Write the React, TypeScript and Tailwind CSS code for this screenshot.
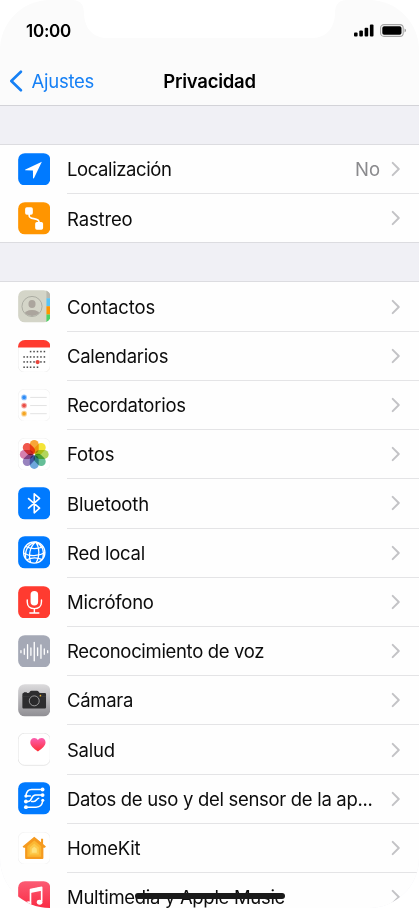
import React from 'react';

type Item = {
  label: string;
  icon: React.ReactNode;
  value?: string;
  tracking?: string;
};

const Chevron = () => (
  <svg viewBox="0 0 10 16" className="w-[10px] h-[16px] shrink-0" fill="none">
    <path d="M1.7 1.9 7.8 8l-6.1 6.1" stroke="#c3c3c6" strokeWidth="2" strokeLinecap="round" strokeLinejoin="round" />
  </svg>
);

function Tile({ fill, border, children }: { fill: string; border?: string; children: React.ReactNode }) {
  return (
    <svg viewBox="0 0 32 32" className="w-[32.5px] h-[32.5px] shrink-0">
      <rect x=".15" y=".15" width="31.7" height="31.7" rx="6.6" fill={fill} stroke={border ?? 'none'} strokeWidth=".7" />
      {children}
    </svg>
  );
}

const petals = ['#f89a1c', '#f3e11b', '#a8cf45', '#4fb589', '#5a9bd8', '#8a72b5', '#cf6da3', '#ee3f33'];
const calendarRows = [
  { y: 11.4, xs: [12.4, 15.8, 19.2, 22.6, 26] },
  { y: 16.7, xs: [6, 9.2, 12.4, 15.8, 19.2, 22.6, 26] },
  { y: 21.6, xs: [6, 9.2, 12.4, 15.8, 22.6, 26] },
  { y: 26.8, xs: [6, 9.2, 12.4, 15.8, 19.2] },
];
const waves = [
  [2.9, 1], [6.2, 2.6], [9.4, 6.8], [12.7, 3.6], [16, 9], [19.3, 3.8], [22.6, 6.6], [25.9, 2.6], [29.2, 1],
];

const LocationIcon = (
  <Tile fill="#007aff">
    <path d="M23.5 8.7 7.3 16.2c-.5.3-.4.9.2.9l7.2.2.1 7.2c0 .7.7.8 1 .2Z" fill="#fff" />
  </Tile>
);

const TrackingIcon = (
  <Tile fill="#ff9500">
    <path d="M11 11v2.5c0 4.5 9.8 1 9.8 6.5v3" stroke="#fff" strokeWidth="1.6" fill="none" />
    <rect x="7" y="5.2" width="7.6" height="7.4" rx="1.7" fill="#fff" />
    <rect x="16.9" y="19.6" width="7.8" height="7.8" rx="1.7" fill="#fff" />
  </Tile>
);

const ContactsIcon = (
  <Tile fill="#d4d5c8">
    <clipPath id="contacts-tile"><rect width="32" height="32" rx="6.8" /></clipPath>
    <clipPath id="contacts-face"><circle cx="13.8" cy="16.2" r="9.4" /></clipPath>
    <g clipPath="url(#contacts-tile)">
      <path d="M28 0h4v8h-4z" fill="#b8b8ae" />
      <path d="M28 8h4v8h-4z" fill="#5ac4f5" />
      <path d="M28 16h4v8h-4z" fill="#ff9500" />
      <path d="M28 24h4v8h-4z" fill="#4cd263" />
    </g>
    <g clipPath="url(#contacts-face)" fill="#aba59d">
      <ellipse cx="13.8" cy="13.8" rx="3.5" ry="4" />
      <ellipse cx="13.8" cy="24.3" rx="8" ry="4.6" />
    </g>
    <circle cx="13.8" cy="16.2" r="9.9" fill="none" stroke="#a9aaa0" strokeWidth=".9" />
  </Tile>
);

const CalendarIcon = (
  <Tile fill="#fff" border="#eaeaea">
    <path d="M0 7.4V6.8A6.8 6.8 0 0 1 6.8 0h18.4A6.8 6.8 0 0 1 32 6.8v.6Z" fill="#ff3b30" />
    {calendarRows.map((row) =>
      row.xs.map((x) => (
        <rect key={`${x}-${row.y}`} x={x - 0.75} y={row.y - 0.75} width="1.5" height="1.5" fill="#4a4a4a" />
      ))
    )}
    <circle cx="19.3" cy="21.7" r="2.1" fill="#e8453c" />
  </Tile>
);

const RemindersIcon = (
  <Tile fill="#fff" border="#efefef">
    {[['#2e8cf6', 8.3], ['#ea4f48', 16.3], ['#f5a623', 24.3]].map(([color, y]) => (
      <g key={color}>
        <circle cx="6" cy={y} r="2.8" fill={color as string} opacity=".5" />
        <circle cx="6" cy={y} r="1.8" fill={color as string} />
        <path d={`M12 ${y}h16.3`} stroke="#dcdcdc" strokeWidth=".8" />
      </g>
    ))}
  </Tile>
);

const PhotosIcon = (
  <Tile fill="#fff" border="#efefef">
    {petals.map((color, i) => (
      <rect
        key={color}
        x="11.6"
        y="2"
        width="8.8"
        height="13.4"
        rx="4.4"
        fill={color}
        opacity=".88"
        transform={`rotate(${i * 45} 16 16.2)`}
        className="mix-blend-multiply"
      />
    ))}
  </Tile>
);

const BluetoothIcon = (
  <Tile fill="#007aff">
    <path d="m10.4 11.4 10.8 9.5-5.2 4.5V6.7l5.2 4.5-10.8 9.5" fill="none" stroke="#fff" strokeWidth="1.6" strokeLinejoin="round" strokeLinecap="round" />
  </Tile>
);

const NetworkIcon = (
  <Tile fill="#007aff">
    <g fill="none" stroke="#fff" strokeWidth="1.2">
      <circle cx="16" cy="16.2" r="10.5" strokeWidth="1.3" />
      <path d="M17.5 5.8C11.5 10 10 20 12.6 26.2M17.5 5.8c3.8 5.5 4.2 14.5.2 20.8M17.5 5.8c6 3 8.5 9 7 15.8M17.5 5.8C10 8 6.8 14 7.6 21.5" />
      <path d="M7.8 10.3c5 2.6 11.5 2.5 17 .3M5.5 16.8c6 3.6 14.6 3.6 21-.6M8.6 23.4c4.4-2 11-2 15.4-.2" />
    </g>
  </Tile>
);

const MicIcon = (
  <Tile fill="#ff3b30">
    <rect x="12.4" y="5" width="7.4" height="14.2" rx="3.7" fill="#fff" />
    <path d="M9.1 13.8v2c0 4 2.8 6.5 7 6.5s7-2.5 7-6.5v-2M16.1 22.3v4M11.7 26.6h8.8" fill="none" stroke="#fff" strokeWidth="1.4" strokeLinecap="round" />
  </Tile>
);

const SpeechIcon = (
  <Tile fill="#a5a9b6">
    {waves.map(([x, h]) => (
      <path key={x} d={`M${x} ${16.4 - h}v${h * 2}`} stroke="#fff" strokeWidth="1.3" strokeLinecap="round" />
    ))}
  </Tile>
);

const CameraIcon = (
  <Tile fill="url(#camera-bg)">
    <linearGradient id="camera-bg" x1="0" y1="0" x2="0" y2="1">
      <stop stopColor="#dcdbdd" />
      <stop offset="1" stopColor="#8f8e93" />
    </linearGradient>
    <path d="M4.3 10.2c0-.9.6-1.4 1.4-1.4V8.2h3v.6H10c1.6 0 1.7-2.2 3.3-2.2h5.4c1.6 0 1.7 2.2 3.3 2.2h4.2c.9 0 1.4.5 1.4 1.4v12.6c0 .9-.5 1.4-1.4 1.4H5.7c-.9 0-1.4-.5-1.4-1.4Z" fill="#2d2d2f" />
    <path d="M4.3 12.4h23.3" stroke="#454547" strokeWidth=".5" />
    <circle cx="16" cy="16.6" r="5.8" fill="#2d2d2f" />
    <circle cx="16" cy="16.6" r="4.9" fill="#29292b" stroke="#b0b0b2" strokeWidth=".8" />
    <circle cx="22.1" cy="11.5" r=".8" fill="#f0b62c" />
  </Tile>
);

const HealthIcon = (
  <Tile fill="#fff" border="#dedede">
    <linearGradient id="heart" x1="0" y1="0" x2="0" y2="1">
      <stop stopColor="#fb5fb0" />
      <stop offset="1" stopColor="#ff2d35" />
    </linearGradient>
    <path d="M19.6 18.2c-4.5-3-7.5-5.6-7.5-9 0-2.5 1.7-4.3 3.9-4.3 1.6 0 2.8.8 3.6 2.1.8-1.3 2-2.1 3.6-2.1 2.2 0 3.9 1.8 3.9 4.3 0 3.4-3 6-7.5 9Z" fill="url(#heart)" />
  </Tile>
);

const SensorIcon = (
  <Tile fill="#007aff">
    <g fill="none" stroke="#fff" strokeWidth="1.5" strokeLinecap="round">
      <path d="M24 7.4H13.4c-3.6 0-5.2 2.4-5.6 6.4h4.4" />
      <path d="M24 12.9h-6.6c-2.8 0-3.2 1.2-4 3.2-.7 2-1.4 3.1-3.5 3.1H7.8" />
      <path d="M13.4 19.2h2.2c2.6 0 2.8-3.2 4.8-3.2" />
      <path d="M24.4 18c-.4 4.3-2.4 6.8-6.6 6.8H7.8" />
    </g>
    <g fill="#fff">
      <circle cx="24.2" cy="7.4" r="1.9" />
      <circle cx="24.2" cy="12.9" r="1.9" />
      <circle cx="24.4" cy="18" r="1.5" />
      <circle cx="7.8" cy="13.9" r="1.6" />
      <circle cx="7.8" cy="19.2" r="1.9" />
      <circle cx="7.8" cy="24.8" r="1.9" />
    </g>
  </Tile>
);

const HomeIcon = (
  <Tile fill="#fff" border="#efefef">
    <path d="M16 4.6 4.5 14.2l1 1.2H7v10.2c0 .6.4.9.9.9h16.2c.5 0 .9-.3.9-.9V15.4h1.5l1-1.2-2.8-2.4V6.7h-2v3.4Z" fill="#f59a1f" />
    <path d="M16 8.3 9.2 14v10.3h13.6V14Z" fill="#fbb733" />
    <path d="m16 11.4-4.5 3.8v7h9v-7Z" fill="#fdc94c" />
    <path d="m16 14.4-2.5 2.1v4h5v-4Z" fill="#fee17c" />
  </Tile>
);

const MusicIcon = (
  <Tile fill="url(#music-bg)">
    <linearGradient id="music-bg" x1="0" y1="0" x2="0" y2="1">
      <stop stopColor="#fb5c74" />
      <stop offset="1" stopColor="#fa233b" />
    </linearGradient>
    <path d="M12.3 21.5V8.4l11-2.2v13.5" fill="none" stroke="#fff" strokeWidth="1.6" strokeLinejoin="round" />
    <path d="m12.3 8 11-2.2v3.7l-11 2.2Z" fill="#fff" />
    <ellipse cx="10.4" cy="22.3" rx="2.8" ry="2.4" fill="#fff" />
    <ellipse cx="21.3" cy="20.9" rx="2.8" ry="2.4" fill="#fff" />
  </Tile>
);

const locationItems: Item[] = [
  { label: 'Localización', icon: LocationIcon, value: 'No', tracking: 'tracking-[-0.4px]' },
  { label: 'Rastreo', icon: TrackingIcon, tracking: 'tracking-[-0.15px]' },
];

const appItems: Item[] = [
  { label: 'Contactos', icon: ContactsIcon, tracking: 'tracking-[-0.15px]' },
  { label: 'Calendarios', icon: CalendarIcon, tracking: 'tracking-[-0.3px]' },
  { label: 'Recordatorios', icon: RemindersIcon },
  { label: 'Fotos', icon: PhotosIcon, tracking: 'tracking-[-0.1px]' },
  { label: 'Bluetooth', icon: BluetoothIcon, tracking: 'tracking-[-0.15px]' },
  { label: 'Red local', icon: NetworkIcon, tracking: 'tracking-[-0.25px]' },
  { label: 'Micrófono', icon: MicIcon, tracking: 'tracking-[-0.25px]' },
  { label: 'Reconocimiento de voz', icon: SpeechIcon, tracking: 'tracking-[-0.33px]' },
  { label: 'Cámara', icon: CameraIcon, tracking: 'tracking-[-0.3px]' },
  { label: 'Salud', icon: HealthIcon },
  { label: 'Datos de uso y del sensor de la ap...', icon: SensorIcon, tracking: 'tracking-[-0.31px]' },
  { label: 'HomeKit', icon: HomeIcon },
  { label: 'Multimedia y Apple Music', icon: MusicIcon, tracking: 'tracking-[-0.31px]' },
];

function Row({ item, last }: { item: Item; last: boolean }) {
  return (
    <li className="flex h-[49.22px] pl-[17.5px]">
      <div className="flex w-[49.5px] items-center pb-px">{item.icon}</div>
      <div className={`flex flex-1 items-center pr-[18px] border-b ${last ? 'border-transparent' : 'border-[#e4e4e6]'}`}>
        <span className={`flex-1 whitespace-nowrap pt-[0.4px] ${item.tracking ?? 'tracking-[-0.25px]'}`}>{item.label}</span>
        {item.value && <span className="mr-[11px] pt-[0.4px] text-[#8a8a8d]">{item.value}</span>}
        <Chevron />
      </div>
    </li>
  );
}

function Group({ items }: { items: Item[] }) {
  return (
    <ul className="border-t border-[#dcdce0] bg-[#fefefe]">
      {items.map((item, i) => (
        <Row key={item.label} item={item} last={i === items.length - 1} />
      ))}
    </ul>
  );
}

export default function App() {
  return (
    <div className="h-[908px] w-[419px] overflow-hidden bg-white">
      <div className="relative flex h-full w-full flex-col overflow-hidden rounded-[50px] bg-[#fefefe] font-['Inter',sans-serif] text-[18.5px] leading-6 text-[#0c0c0c]">
        <header className="h-[106px] shrink-0 border-b border-[#d3d3d8] bg-[#fbfbfb]">
          <svg viewBox="0 0 419 40" className="absolute left-0 top-0 h-10 w-[419px]">
            <path d="M72 0c9 0 12 5 12 14 1 16 10 24 24 24h203c14 0 23-8 24-24 0-9 3-14 12-14Z" fill="#fff" />
          </svg>
          <div className="relative flex h-[56px] items-center justify-between pl-[26px] pr-[12px] pt-[5px]">
            <span className="text-[17px] font-semibold tracking-[-0.25px] text-black">10:00</span>
            <div className="flex items-center gap-[6px]">
              <svg viewBox="0 0 20 13" className="h-[13px] w-[20px]">
                <rect x="0" y="8.6" width="3.6" height="4" rx="1" />
                <rect x="5.3" y="6.5" width="3.6" height="6.1" rx="1" />
                <rect x="10.6" y="3.7" width="3.6" height="8.9" rx="1" />
                <rect x="15.9" y=".6" width="3.6" height="12" rx="1" />
              </svg>
              <svg viewBox="0 0 27 13" className="h-[13px] w-[27px]">
                <rect x=".6" y=".6" width="22.6" height="11.8" rx="3.4" fill="none" stroke="#a5a5a5" strokeWidth="1.1" />
                <rect x="2.3" y="2.2" width="19.2" height="8.6" rx="1.8" />
                <path d="M24.6 4.6c1.7.6 1.7 3.2 0 3.8Z" fill="#8a8a8a" />
              </svg>
            </div>
          </div>
          <div className="grid h-[49px] grid-cols-[1fr_auto_1fr] items-center">
            <div className="flex items-center gap-[8.5px] pl-[9px] text-[#1680f5]">
              <svg viewBox="0 0 14 22" className="h-[22px] w-[14px]" fill="none">
                <path d="M11.9 1.7 2.3 11l9.6 9.3" stroke="currentColor" strokeWidth="2.6" strokeLinecap="round" strokeLinejoin="round" />
              </svg>
              <span className="tracking-[-0.25px]">Ajustes</span>
            </div>
            <h1 className="font-semibold tracking-[-0.25px] text-black">Privacidad</h1>
          </div>
        </header>
        <main className="flex-1 overflow-hidden bg-[#f0f0f5]">
          <div className="h-[38px]" />
          <Group items={locationItems} />
          <div className="-mt-px h-[39px] border-t border-[#dcdce0]" />
          <Group items={appItems} />
        </main>
        {/* home indicator */}
        <div className="absolute left-[135px] top-[893px] h-[6px] w-[150px] rounded-full bg-[#1a1a1a]" />
      </div>
    </div>
  );
}
